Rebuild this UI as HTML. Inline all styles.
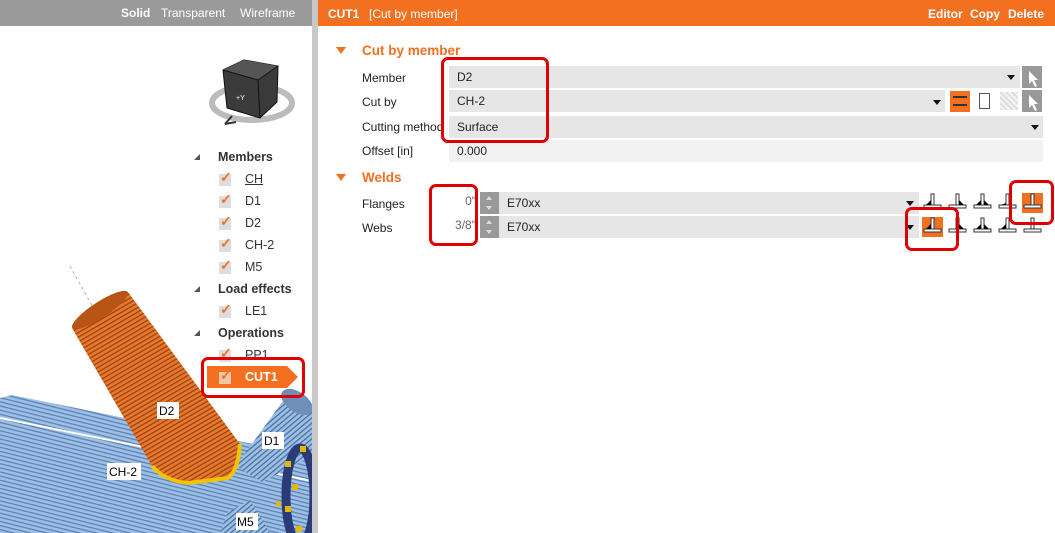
<!DOCTYPE html>
<html><head><meta charset="utf-8"><style>
*{margin:0;padding:0;box-sizing:border-box}
body{width:1055px;height:533px;overflow:hidden;background:#fff;font-family:"Liberation Sans",sans-serif;font-size:12px;color:#222;position:relative}
.a{position:absolute;white-space:nowrap}
.lh{left:0;top:0;width:312px;height:26px;background:#9a9a9a;color:#fff;font-size:12px}
.div{left:312px;top:0;width:6px;height:533px;background:#c8c8c8}
.rh{left:318px;top:0;width:737px;height:26px;background:#f37021;color:#fff}
.fld{background:#e6e6e6;height:22px;line-height:22px;padding-left:8px;font-size:12px}
.lbl{font-size:12px}
.sec{color:#f37021;font-weight:bold;font-size:13.5px}
.tri{width:0;height:0;border-left:5px solid transparent;border-right:5px solid transparent;border-top:7px solid #f37021}
.dd{width:0;height:0;border-left:4px solid transparent;border-right:4px solid transparent;border-top:5px solid #111}
.red{border:3px solid #e10000;border-radius:7px}
.tree{font-size:12.5px;color:#333}
.cb{width:12px;height:12px;background:#ddd}
.ck{color:#f37021;font-size:14px;font-weight:bold}
.cur{width:20px;height:22px;background:#999}
.sp{width:19px;height:22px;background:#999}
.sp:before{content:"";position:absolute;left:6px;top:4px;border-left:3px solid transparent;border-right:3px solid transparent;border-bottom:4px solid #ddd}
.sp:after{content:"";position:absolute;left:6px;top:14px;border-left:3px solid transparent;border-right:3px solid transparent;border-top:4px solid #ddd}
</style></head><body>
<div class="a lh"><span class="a" style="left:121px;top:6px;font-weight:bold">Solid</span><span class="a" style="left:161px;top:6px">Transparent</span><span class="a" style="left:240px;top:6px">Wireframe</span></div>
<div class="a div"></div>
<svg class="a" style="left:0;top:26px" width="312" height="507">
<defs>
<pattern id="bl" width="4" height="4" patternUnits="userSpaceOnUse" patternTransform="rotate(14)"><rect width="4" height="4" fill="#9cc0e8"/><rect width="4" height="1.3" fill="#5f83b0"/></pattern>
<pattern id="or" width="4" height="4" patternUnits="userSpaceOnUse" patternTransform="rotate(60)"><rect width="4" height="4" fill="#e8782c"/><rect width="1.3" height="4" fill="#9a4212"/></pattern>
<pattern id="bl2" width="4" height="4" patternUnits="userSpaceOnUse" patternTransform="rotate(-40)"><rect width="4" height="4" fill="#9cc0e8"/><rect width="4" height="1.3" fill="#4d6f9a"/></pattern>
</defs>
<line x1="70" y1="240" x2="95" y2="285" stroke="#9bb" stroke-dasharray="3,3"/>
<polygon points="0,372 12,369 312,430 312,507 0,507" fill="url(#bl)"/>
<line x1="0" y1="392" x2="312" y2="455" stroke="#fff" stroke-width="2"/>
<polygon points="236,440 288,368 312,378 312,430 262,456" fill="url(#bl2)"/>
<ellipse cx="297" cy="376" rx="18" ry="10" fill="#6f8fb8" transform="rotate(35 297 376)"/>
<polygon points="220,507 228,486 250,474 270,507" fill="url(#bl2)"/>
<ellipse cx="300" cy="470" rx="14" ry="48" fill="none" stroke="#2a3b78" stroke-width="9"/>
<g fill="#e4b800"><rect x="285" y="435" width="6" height="6"/><rect x="292" y="458" width="6" height="6"/><rect x="285" y="480" width="6" height="6"/><rect x="296" y="500" width="6" height="6"/><rect x="276" y="475" width="5" height="5"/><rect x="300" y="420" width="6" height="6"/></g>
<path d="M72,302 L128,266 L240,418 Q238,445 228,452 L188,457 Q160,452 152,440 Z" fill="url(#or)"/>
<path d="M152,440 Q165,455 188,457 L228,452 Q238,445 240,418" fill="none" stroke="#f2c400" stroke-width="4"/>
<ellipse cx="100" cy="284" rx="33" ry="8" transform="rotate(-33 100 284)" fill="#b85516"/>
<g font-size="12" font-family="Liberation Sans"><rect x="157" y="376" width="22" height="17" fill="#fff"/><text x="159" y="389">D2</text>
<rect x="262" y="406" width="22" height="17" fill="#fff"/><text x="264" y="419">D1</text>
<rect x="107" y="437" width="34" height="17" fill="#fff"/><text x="109" y="450">CH-2</text>
<rect x="236" y="487" width="22" height="17" fill="#fff"/><text x="237" y="500">M5</text></g>
<ellipse cx="252" cy="77" rx="40" ry="17" fill="none" stroke="#bbb" stroke-width="6"/>
<polygon points="223,44 244,34 278,40 277,76 260,92 227,82" fill="#3b3b3b" stroke="#111"/>
<polygon points="223,44 244,34 278,40 258,54" fill="#555"/>
<line x1="258" y1="54" x2="260" y2="92" stroke="#111"/><line x1="258" y1="54" x2="223" y2="44" stroke="#111"/><line x1="258" y1="54" x2="278" y2="40" stroke="#111"/>
<text x="236" y="74" fill="#fff" font-size="7">+Y</text>
<path d="M225,98 L232,90 M225,98 L236,96" stroke="#333" stroke-width="2"/>
</svg>
<div class="a tree" style="left:180px;top:140px;width:132px;height:260px">
<div class="a" style="left:14px;top:14px;border-left:6px solid transparent;border-bottom:6px solid #555;width:0;height:0"></div>
<div class="a" style="left:38px;top:10px;font-weight:bold">Members</div>
<div class="a" style="left:14px;top:146px;border-left:6px solid transparent;border-bottom:6px solid #555;width:0;height:0"></div>
<div class="a" style="left:38px;top:142px;font-weight:bold">Load effects</div>
<div class="a" style="left:14px;top:190px;border-left:6px solid transparent;border-bottom:6px solid #555;width:0;height:0"></div>
<div class="a" style="left:38px;top:186px;font-weight:bold">Operations</div>
</div>
<div class="a tree" style="left:219px;top:172px"><span class="a cb" style="top:2px"></span><span class="a ck" style="left:1px;top:-3px">✓</span><span class="a" style="left:26px;text-decoration:underline">CH</span></div>
<div class="a tree" style="left:219px;top:194px"><span class="a cb" style="top:2px"></span><span class="a ck" style="left:1px;top:-3px">✓</span><span class="a" style="left:26px">D1</span></div>
<div class="a tree" style="left:219px;top:216px"><span class="a cb" style="top:2px"></span><span class="a ck" style="left:1px;top:-3px">✓</span><span class="a" style="left:26px">D2</span></div>
<div class="a tree" style="left:219px;top:238px"><span class="a cb" style="top:2px"></span><span class="a ck" style="left:1px;top:-3px">✓</span><span class="a" style="left:26px">CH-2</span></div>
<div class="a tree" style="left:219px;top:260px"><span class="a cb" style="top:2px"></span><span class="a ck" style="left:1px;top:-3px">✓</span><span class="a" style="left:26px">M5</span></div>
<div class="a tree" style="left:219px;top:304px"><span class="a cb" style="top:2px"></span><span class="a ck" style="left:1px;top:-3px">✓</span><span class="a" style="left:26px">LE1</span></div>
<div class="a tree" style="left:219px;top:348px"><span class="a cb" style="top:2px"></span><span class="a ck" style="left:1px;top:-3px">✓</span><span class="a" style="left:26px">PP1</span></div>
<svg class="a" style="left:207px;top:366px" width="92" height="22"><polygon points="0,0 80,0 91,11 80,22 0,22" fill="#f37021"/></svg>
<div class="a tree" style="left:219px;top:370px"><span class="a cb" style="top:2px;background:#f0c8a8"></span><span class="a ck" style="left:1px;top:-3px">✓</span><span class="a" style="left:26px;color:#fff;font-weight:bold">CUT1</span></div>
<div class="a red" style="left:201px;top:357px;width:104px;height:41px"></div>
<div class="a rh"><span class="a" style="left:10px;top:7px;font-weight:bold">CUT1</span><span class="a" style="left:51px;top:7px">[Cut by member]</span>
<span class="a" style="left:610px;top:7px;font-weight:bold">Editor</span><span class="a" style="left:652px;top:7px;font-weight:bold">Copy</span><span class="a" style="left:690px;top:7px;font-weight:bold">Delete</span></div>
<div class="a tri" style="left:336px;top:47px"></div>
<div class="a sec" style="left:362px;top:43px">Cut by member</div>
<div class="a lbl" style="left:362px;top:71px">Member</div>
<div class="a lbl" style="left:362px;top:95px">Cut by</div>
<div class="a lbl" style="left:362px;top:120px">Cutting method</div>
<div class="a lbl" style="left:362px;top:144px">Offset [in]</div>
<div class="a fld" style="left:449px;top:66px;width:571px">D2</div>
<div class="a dd" style="left:1007px;top:75px"></div>
<div class="a cur" style="left:1022px;top:66px"></div>
<div class="a fld" style="left:449px;top:90px;width:496px">CH-2</div>
<div class="a dd" style="left:933px;top:100px"></div>
<div class="a" style="left:950px;top:91px;width:20px;height:21px;background:#f37021"><div class="a" style="left:3px;top:5px;width:14px;height:10px;border:2px solid #333;border-left:none;border-right:none"></div></div>
<div class="a" style="left:979px;top:93px;width:11px;height:16px;border:1px solid #555"></div>
<div class="a" style="left:1000px;top:92px;width:18px;height:18px;background:repeating-linear-gradient(45deg,#ddd 0 2px,#f4f4f4 2px 4px)"></div>
<div class="a cur" style="left:1022px;top:90px"></div>
<svg class="a" style="left:1026px;top:68px" width="14" height="44"><path d="M3,3 L3,16 L6,13 L9,19 L11,18 L8,12 L12,12 Z" fill="#fff"/><path d="M3,27 L3,40 L6,37 L9,43 L11,42 L8,36 L12,36 Z" fill="#fff"/></svg>
<div class="a fld" style="left:449px;top:116px;width:594px">Surface</div>
<div class="a dd" style="left:1031px;top:125px"></div>
<div class="a fld" style="left:449px;top:140px;width:594px;background:#f2f2f2">0.000</div>
<div class="a red" style="left:441px;top:57px;width:108px;height:86px"></div>
<div class="a tri" style="left:336px;top:174px"></div>
<div class="a sec" style="left:362px;top:170px">Welds</div>
<div class="a lbl" style="left:362px;top:197px">Flanges</div>
<div class="a lbl" style="left:362px;top:221px">Webs</div>
<div class="a" style="left:440px;top:194px;width:36px;text-align:right;color:#666">0"</div>
<div class="a" style="left:440px;top:218px;width:36px;text-align:right;color:#666">3/8"</div>
<div class="a sp" style="left:480px;top:192px"></div>
<div class="a sp" style="left:480px;top:216px"></div>
<div class="a fld" style="left:499px;top:192px;width:420px">E70xx</div>
<div class="a fld" style="left:499px;top:216px;width:420px">E70xx</div>
<div class="a dd" style="left:906px;top:201px"></div>
<div class="a dd" style="left:906px;top:225px"></div>
<div class="a" style="left:1022px;top:193px;width:21px;height:20px;background:#f37021"></div>
<div class="a" style="left:922px;top:217px;width:21px;height:20px;background:#f37021"></div>
<svg class="a" style="left:920px;top:190px" width="135" height="50" fill="#fff" stroke="#333" stroke-width="1">
<g id="w"><rect x="11" y="4" width="3" height="12"/><rect x="4" y="15" width="17" height="3"/></g>
<use href="#w" x="25"/><use href="#w" x="50"/><use href="#w" x="75"/><use href="#w" x="100"/>
<use href="#w" y="24"/><use href="#w" x="25" y="24"/><use href="#w" x="50" y="24"/><use href="#w" x="75" y="24"/><use href="#w" x="100" y="24"/>
<g fill="#000" stroke="none"><polygon points="6,15 11,15 11,10"/><polygon points="39,15 39,10 44,15"/><polygon points="56,15 61,15 61,10"/><polygon points="64,15 64,10 69,15"/><polygon points="81,15 86,15 86,13"/>
<polygon points="6,39 11,39 11,34"/><polygon points="39,39 39,34 44,39"/><polygon points="56,39 61,39 61,34"/><polygon points="64,39 64,34 69,39"/><polygon points="81,39 86,39 86,34"/></g>
</svg>
<div class="a red" style="left:429px;top:184px;width:49px;height:62px"></div>
<div class="a red" style="left:905px;top:207px;width:54px;height:44px"></div>
<div class="a red" style="left:1009px;top:180px;width:45px;height:45px"></div>
</body></html>
